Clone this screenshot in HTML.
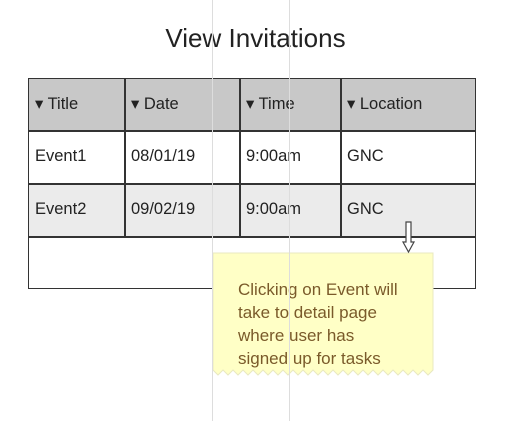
<!DOCTYPE html>
<html><head><style>
body{margin:0;width:511px;height:421px;background:#fff;position:relative;overflow:hidden;font-family:"Liberation Sans",Arial,sans-serif;color:#222}
.vl{position:absolute;top:0;width:1px;height:421px;background:#ddd;z-index:5}
.t{position:absolute;font-size:16.5px;}
</style></head><body>
<div style="position:absolute;left:0;width:511px;top:23px;text-align:center;font-size:26px;color:#222">View Invitations</div>
<div style="position:absolute;left:28px;top:78px;width:448px;height:211px;border:1.5px solid #333;box-sizing:border-box"></div>
<div style="position:absolute;left:29px;top:79px;width:446px;height:51px;background:#c8c8c8"></div>
<div style="position:absolute;left:29px;top:184px;width:446px;height:52px;background:#ebebeb"></div>
<div style="position:absolute;left:28px;top:130px;width:448px;height:1.5px;background:#333"></div>
<div style="position:absolute;left:28px;top:183px;width:448px;height:1.5px;background:#333"></div>
<div style="position:absolute;left:28px;top:236px;width:448px;height:1.5px;background:#333"></div>
<div style="position:absolute;left:124px;top:78px;width:1.5px;height:159px;background:#333"></div>
<div style="position:absolute;left:239px;top:78px;width:1.5px;height:159px;background:#333"></div>
<div style="position:absolute;left:340px;top:78px;width:1.5px;height:159px;background:#333"></div>
<div class="t" style="left:35px;top:94px">▾ Title</div>
<div class="t" style="left:131px;top:94px">▾ Date</div>
<div class="t" style="left:246px;top:94px">▾ Time</div>
<div class="t" style="left:347px;top:94px">▾ Location</div>
<div class="t" style="left:35px;top:147px">Event1</div>
<div class="t" style="left:131px;top:147px">08/01/19</div>
<div class="t" style="left:246px;top:147px">9:00am</div>
<div class="t" style="left:347px;top:147px">GNC</div>
<div class="t" style="left:35px;top:200px">Event2</div>
<div class="t" style="left:131px;top:200px">09/02/19</div>
<div class="t" style="left:246px;top:200px">9:00am</div>
<div class="t" style="left:347px;top:200px">GNC</div>
<svg style="position:absolute;left:0;top:0" width="511" height="421">
<path d="M213 253 H433 V370 l-5 5 l-5 -5 l-5 5 l-5 -5 l-5 5 l-5 -5 l-5 5 l-5 -5 l-5 5 l-5 -5 l-5 5 l-5 -5 l-5 5 l-5 -5 l-5 5 l-5 -5 l-5 5 l-5 -5 l-5 5 l-5 -5 l-5 5 l-5 -5 l-5 5 l-5 -5 l-5 5 l-5 -5 l-5 5 l-5 -5 l-5 5 l-5 -5 l-5 5 l-5 -5 l-5 5 l-5 -5 l-5 5 l-5 -5 l-5 5 l-5 -5 l-5 5 l-5 -5 l-5 5 l-5 -5 l-5 5 l-5 -5 Z" fill="#ffffc6" stroke="#e8e8c0" stroke-width="1"/>
<path d="M406 222 H411 V242 H414 L408.5 252 L403 242 H406 Z" fill="#fff" stroke="#444" stroke-width="1.2"/>
</svg>
<div style="position:absolute;left:238px;top:278px;font-size:17px;line-height:23px;color:#7a5a2a">Clicking on Event will<br>take to detail page<br>where user has<br>signed up for tasks</div>
<div class="vl" style="left:212px"></div>
<div class="vl" style="left:289px"></div>
</body></html>
